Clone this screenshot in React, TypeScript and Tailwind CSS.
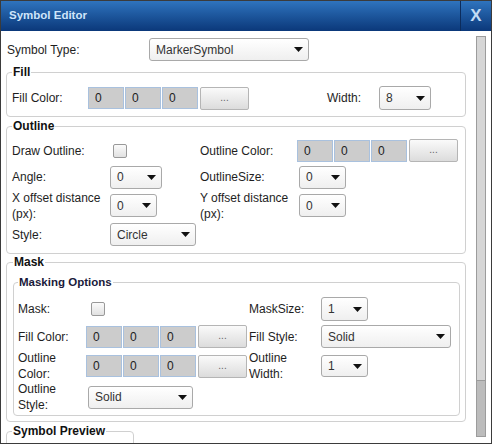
import React from "react";

function Caret() {
  return (
    <svg width="9" height="5" viewBox="0 0 9 5" className="shrink-0">
      <path d="M0 0h9L4.5 5z" fill="#111" />
    </svg>
  );
}

function Select({ value, className }: { value: string; className: string }) {
  return (
    <div
      className={`flex items-center justify-between shrink-0 border border-[#a9a9a9] rounded-[3px] bg-gradient-to-b from-white to-[#efefef] pl-[6px] pr-[5px] text-[12px] text-[#333] ${className}`}
    >
      <span>{value}</span>
      <Caret />
    </div>
  );
}

function Checkbox({ className }: { className: string }) {
  return (
    <div
      className={`w-[14px] h-[14px] shrink-0 border border-[#999] rounded-[2px] bg-gradient-to-b from-[#fbfbfb] to-[#e1e1e1] ${className}`}
    />
  );
}

function ColorPicker() {
  return (
    <div className="flex items-center shrink-0">
      {["0", "0", "0"].map((v, i) => (
        <div
          key={i}
          className="w-[36px] h-[22px] mr-px flex items-center pl-[6px] bg-[#cccccc] border border-[#a9c1de] text-[12px] text-[#222]"
        >
          {v}
        </div>
      ))}
      <div className="ml-px w-[49px] h-[23px] flex items-center justify-center border border-[#b5b5b5] rounded-[2px] bg-gradient-to-b from-[#fafafa] to-[#dcdcdc] text-[10px] text-[#666] pb-[2px]">
        ...
      </div>
    </div>
  );
}

function Label({ text, className }: { text: string; className: string }) {
  return <div className={`shrink-0 text-[12px] leading-[16px] text-[#1e1e1e] ${className}`}>{text}</div>;
}

export default function App() {
  return (
    <div className="w-[492px] h-[444px] border border-[#3b3b3b] flex flex-col overflow-hidden bg-white font-['Liberation_Sans',Arial,sans-serif]">
      {/* Title bar */}
      <div className="h-[30px] shrink-0 flex items-stretch bg-gradient-to-b from-[#2f74be] to-[#0b387a]">
        <div className="flex-1 flex items-center pl-[8px] text-[11.5px] font-bold text-[#cfe5fa]">Symbol Editor</div>
        <div className="w-[31px] flex items-center justify-center border-l border-[#0c2c5c] text-[17px] font-bold text-[#c2dcf4]">
          X
        </div>
      </div>

      {/* Body */}
      <div className="flex-1 flex overflow-hidden">
        <div className="w-[465px] shrink-0 pl-[5px] pt-[7px] overflow-hidden">
          {/* Symbol type */}
          <div className="flex items-center h-[23px]">
            <Label text="Symbol Type:" className="w-[143px] pl-px" />
            <Select value="MarkerSymbol" className="w-[160px] h-[23px]" />
          </div>

          {/* Fill */}
          <fieldset className="mt-[4px] w-[460px] border border-[#d0d0d0] rounded-[4px] pl-[5px] pt-[6px] pb-[5px]">
            <legend className="px-px text-[12px] leading-[14px] font-bold text-[#111]">Fill</legend>
            <div className="flex items-center h-[26px]">
              <Label text="Fill Color:" className="w-[76px]" />
              <ColorPicker />
              <Label text="Width:" className="ml-[78px] w-[52px]" />
              <Select value="8" className="w-[52px] h-[24px]" />
            </div>
          </fieldset>

          {/* Outline */}
          <fieldset className="mt-[2px] w-[460px] border border-[#d0d0d0] rounded-[4px] pl-[5px] pt-[5px] pb-[4px]">
            <legend className="px-px text-[12px] leading-[14px] font-bold text-[#111]">Outline</legend>
            <div className="flex items-center h-[25px]">
              <div className="w-[188px] flex items-center">
                <Label text="Draw Outline:" className="w-[98px]" />
                <Checkbox className="ml-[3px]" />
              </div>
              <Label text="Outline Color:" className="w-[97px]" />
              <ColorPicker />
            </div>
            <div className="flex items-center h-[28px]">
              <div className="w-[188px] flex items-center">
                <Label text="Angle:" className="w-[98px]" />
                <Select value="0" className="w-[52px] h-[23px]" />
              </div>
              <Label text="OutlineSize:" className="w-[99px]" />
              <Select value="0" className="w-[47px] h-[23px]" />
            </div>
            <div className="flex items-center h-[29px]">
              <div className="w-[188px] flex items-center">
                <Label text="X offset distance (px):" className="w-[98px]" />
                <Select value="0" className="w-[47px] h-[23px]" />
              </div>
              <Label text="Y offset distance (px):" className="w-[99px]" />
              <Select value="0" className="w-[47px] h-[23px]" />
            </div>
            <div className="flex items-center h-[29px]">
              <Label text="Style:" className="w-[98px]" />
              <Select value="Circle" className="w-[86px] h-[23px]" />
            </div>
          </fieldset>

          {/* Mask */}
          <fieldset className="mt-[1px] w-[460px] border border-[#d0d0d0] rounded-[4px] pl-[6px] pr-[5px] pt-[7px] pb-[5px]">
            <legend className="px-px text-[12px] leading-[14px] font-bold text-[#111]">Mask</legend>
            <fieldset className="border border-[#d0d0d0] rounded-[4px] pl-[4px] pt-[6px] pb-[3px]">
              <legend className="px-px text-[11.5px] leading-[13px] font-bold text-[#1a1a3a]">Masking Options</legend>
              <div className="flex items-center h-[28px]">
                <div className="w-[231px] flex items-center">
                  <Label text="Mask:" className="w-[68px]" />
                  <Checkbox className="ml-[5px]" />
                </div>
                <Label text="MaskSize:" className="w-[72px]" />
                <Select value="1" className="w-[47px] h-[24px]" />
              </div>
              <div className="flex items-center h-[27px]">
                <div className="w-[231px] flex items-center">
                  <Label text="Fill Color:" className="w-[68px]" />
                  <ColorPicker />
                </div>
                <Label text="Fill Style:" className="w-[72px]" />
                <Select value="Solid" className="w-[130px] h-[23px]" />
              </div>
              <div className="flex items-center h-[32px]">
                <div className="w-[231px] flex items-center">
                  <Label text="Outline Color:" className="w-[68px]" />
                  <ColorPicker />
                </div>
                <Label text="Outline Width:" className="w-[72px]" />
                <Select value="1" className="w-[47px] h-[22px]" />
              </div>
              <div className="flex items-center h-[30px]">
                <Label text="Outline Style:" className="w-[70px]" />
                <Select value="Solid" className="w-[105px] h-[23px]" />
              </div>
            </fieldset>
          </fieldset>

          {/* Symbol preview */}
          <fieldset className="mt-[2px] w-[128px] h-[60px] border border-[#d0d0d0] rounded-[4px] pl-[5px]">
            <legend className="px-px text-[12px] leading-[14px] font-bold text-[#111]">Symbol Preview</legend>
          </fieldset>
        </div>

        {/* Scrollbar */}
        <div className="ml-[10px] mt-[5px] mb-[6px] w-[10px] shrink-0 flex flex-col border border-[#9c9c9c] bg-[#bcbcbc]">
          <div className="h-[344px] bg-[#d6d6d6] border-b border-[#9c9c9c]" />
        </div>
      </div>
    </div>
  );
}
